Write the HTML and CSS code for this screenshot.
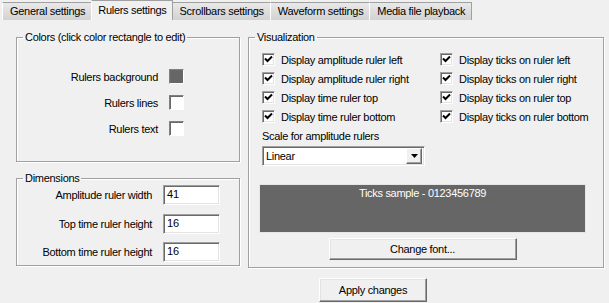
FILE: index.html
```html
<!DOCTYPE html>
<html lang="en">
<head>
<meta charset="UTF-8" />
<title>Rulers settings</title>
<link rel="stylesheet" href="styles.css">
</head>
<body>
<div class="tabs">
<div class="tab">General settings</div>
<div class="tab active">Rulers settings</div>
<div class="tab">Scrollbars settings</div>
<div class="tab">Waveform settings</div>
<div class="tab">Media file playback</div>
</div>
<div class="panel">
<div class="left-col">
<fieldset class="group colors">
<legend>Colors (click color rectangle to edit)</legend>
<div class="color-grid">
<span class="lbl">Rulers background</span><span class="swatch dark"></span>
<span class="lbl">Rulers lines</span><span class="swatch"></span>
<span class="lbl">Rulers text</span><span class="swatch"></span>
</div>
</fieldset>
<fieldset class="group dims">
<legend>Dimensions</legend>
<div class="dim-grid">
<span class="lbl">Amplitude ruler width</span><span class="edit">41</span>
<span class="lbl">Top time ruler height</span><span class="edit">16</span>
<span class="lbl">Bottom time ruler height</span><span class="edit">16</span>
</div>
</fieldset>
</div>
<fieldset class="group vis">
<legend>Visualization</legend>
<div class="check-grid">
<label class="check"><span class="box"><svg width="9" height="9" viewBox="0 0 9 9"><path d="M1 3.5 L3.5 6 L8 1.5" fill="none" stroke="#000" stroke-width="2"/></svg></span>Display amplitude ruler left</label>
<label class="check"><span class="box"><svg width="9" height="9" viewBox="0 0 9 9"><path d="M1 3.5 L3.5 6 L8 1.5" fill="none" stroke="#000" stroke-width="2"/></svg></span>Display ticks on ruler left</label>
<label class="check"><span class="box"><svg width="9" height="9" viewBox="0 0 9 9"><path d="M1 3.5 L3.5 6 L8 1.5" fill="none" stroke="#000" stroke-width="2"/></svg></span>Display amplitude ruler right</label>
<label class="check"><span class="box"><svg width="9" height="9" viewBox="0 0 9 9"><path d="M1 3.5 L3.5 6 L8 1.5" fill="none" stroke="#000" stroke-width="2"/></svg></span>Display ticks on ruler right</label>
<label class="check"><span class="box"><svg width="9" height="9" viewBox="0 0 9 9"><path d="M1 3.5 L3.5 6 L8 1.5" fill="none" stroke="#000" stroke-width="2"/></svg></span>Display time ruler top</label>
<label class="check"><span class="box"><svg width="9" height="9" viewBox="0 0 9 9"><path d="M1 3.5 L3.5 6 L8 1.5" fill="none" stroke="#000" stroke-width="2"/></svg></span>Display ticks on ruler top</label>
<label class="check"><span class="box"><svg width="9" height="9" viewBox="0 0 9 9"><path d="M1 3.5 L3.5 6 L8 1.5" fill="none" stroke="#000" stroke-width="2"/></svg></span>Display time ruler bottom</label>
<label class="check"><span class="box"><svg width="9" height="9" viewBox="0 0 9 9"><path d="M1 3.5 L3.5 6 L8 1.5" fill="none" stroke="#000" stroke-width="2"/></svg></span>Display ticks on ruler bottom</label>
</div>
<div class="scale-label">Scale for amplitude rulers</div>
<div class="combo">
<span class="combo-text">Linear</span>
<span class="combo-btn"><svg width="7" height="4" viewBox="0 0 7 4"><path d="M0 0 H7 L3.5 4 Z" fill="#000"/></svg></span>
</div>
<div class="sample">Ticks sample - 0123456789</div>
<div class="font-row"><button class="btn font-btn">Change font...</button></div>
</fieldset>
</div>
<div class="actions"><button class="btn apply">Apply changes</button></div>
</body>
</html>
```

FILE: styles.css
```css
* {
box-sizing: border-box;
}
body {
margin: 0;
background: #f0f0f0;
color: #000;
font-family: "Liberation Sans", Arial, sans-serif;
font-size: 11px;
letter-spacing: -0.3px;
width: 609px;
height: 303px;
overflow: hidden;
}
/* tab strip */
.tabs {
display: flex;
height: 20px;
padding-left: 2px;
align-items: flex-end;
}
.tab {
height: 18px;
line-height: 16px;
padding: 0 6px 0 7px;
border: 1px solid #a0a0a0;
border-bottom: none;
border-left-color: #fff;
background: linear-gradient(#e9e9e9, #d2d2d2);
margin-right: -1px;
white-space: nowrap;
}
.tab.active {
height: 20px;
line-height: 19px;
background: #f0f0f0;
padding: 0 5px 0 6px;
border-left-color: #fff;
position: relative;
z-index: 1;
}
.tab:last-child {
width: 103px;
}
/* panel */
.panel {
display: flex;
padding: 11px 0 0 16px;
gap: 8px;
}
.left-col {
width: 224px;
display: flex;
flex-direction: column;
gap: 10px;
}
.group {
margin: 0;
padding: 0;
border: 1px solid #a0a0a0;
box-shadow: 1px 1px 0 #fff, inset 1px 1px 0 #fff;
min-width: 0;
}
.group legend {
margin-left: 6px;
padding: 0 2px;
line-height: 13px;
}
.colors {
height: 131px;
}
.dims {
height: 94px;
}
.vis {
width: 356px;
height: 237px;
}
.lbl {
text-align: right;
white-space: nowrap;
}
.color-grid {
display: grid;
grid-template-columns: 141px 15px;
column-gap: 11px;
row-gap: 11px;
padding-top: 25px;
align-items: center;
}
.swatch {
width: 15px;
height: 15px;
background: #fff;
border: 1px solid;
border-color: #808080 #fff #fff #808080;
box-shadow: inset 1px 1px 0 #696969;
}
.swatch.dark {
background: #666;
}
.dim-grid {
display: grid;
grid-template-columns: 135px 57px;
column-gap: 11px;
row-gap: 8.5px;
padding-top: 0;
align-items: center;
}
.edit {
height: 20px;
line-height: 17px;
padding-left: 3px;
background: #fff;
border: 1px solid;
border-color: #a0a0a0 #fff #fff #a0a0a0;
box-shadow: inset 1px 1px 0 #696969, inset -1px -1px 0 #e3e3e3;
letter-spacing: 0;
}
/* visualization */
.check-grid {
display: grid;
grid-template-columns: 178px auto;
grid-auto-rows: 19px;
padding: 6px 0 0 13px;
}
.check {
display: flex;
align-items: center;
gap: 6px;
white-space: nowrap;
}
.box {
width: 13px;
height: 13px;
background: #fff;
border: 1px solid;
border-color: #a0a0a0 #fff #fff #a0a0a0;
box-shadow: inset 1px 1px 0 #696969, inset -1px -1px 0 #e3e3e3;
display: flex;
align-items: center;
justify-content: center;
}
.box svg {
display: block;
}
.scale-label {
margin: 4px 0 0 13px;
line-height: 13px;
}
.combo {
margin: 3px 0 0 13px;
width: 163px;
height: 20px;
display: flex;
align-items: center;
justify-content: space-between;
background: #fff;
border: 1px solid;
border-color: #a0a0a0 #fff #fff #a0a0a0;
box-shadow: inset 1px 1px 0 #696969, inset -1px -1px 0 #e3e3e3;
padding: 1px 2px 1px 3px;
}
.combo-btn {
width: 16px;
height: 16px;
background: #f0f0f0;
border: 1px solid;
border-color: #fff #696969 #696969 #fff;
box-shadow: inset -1px -1px 0 #a0a0a0;
display: flex;
align-items: center;
justify-content: center;
}
.combo-btn svg {
display: block;
}
.sample {
margin: 18px 0 0 10px;
width: 327px;
height: 49px;
background: #666;
color: #fff;
text-align: center;
border: 1px solid #e6e6e6;
padding-top: 2px;
line-height: 13px;
}
.font-row {
display: flex;
justify-content: center;
padding: 5px 0 0 10px;
width: 337px;
}
.btn {
font-family: inherit;
font-size: 11px;
letter-spacing: -0.3px;
color: #000;
background: #f0f0f0;
border: 1px solid;
border-color: #fff #696969 #696969 #fff;
box-shadow: inset -1px -1px 0 #a0a0a0, inset 1px 1px 0 #e3e3e3;
padding: 0;
margin: 0;
}
.font-btn {
width: 188px;
height: 22px;
}
.actions {
padding: 10px 0 0 319px;
}
.apply {
width: 108px;
height: 24px;
}
```
